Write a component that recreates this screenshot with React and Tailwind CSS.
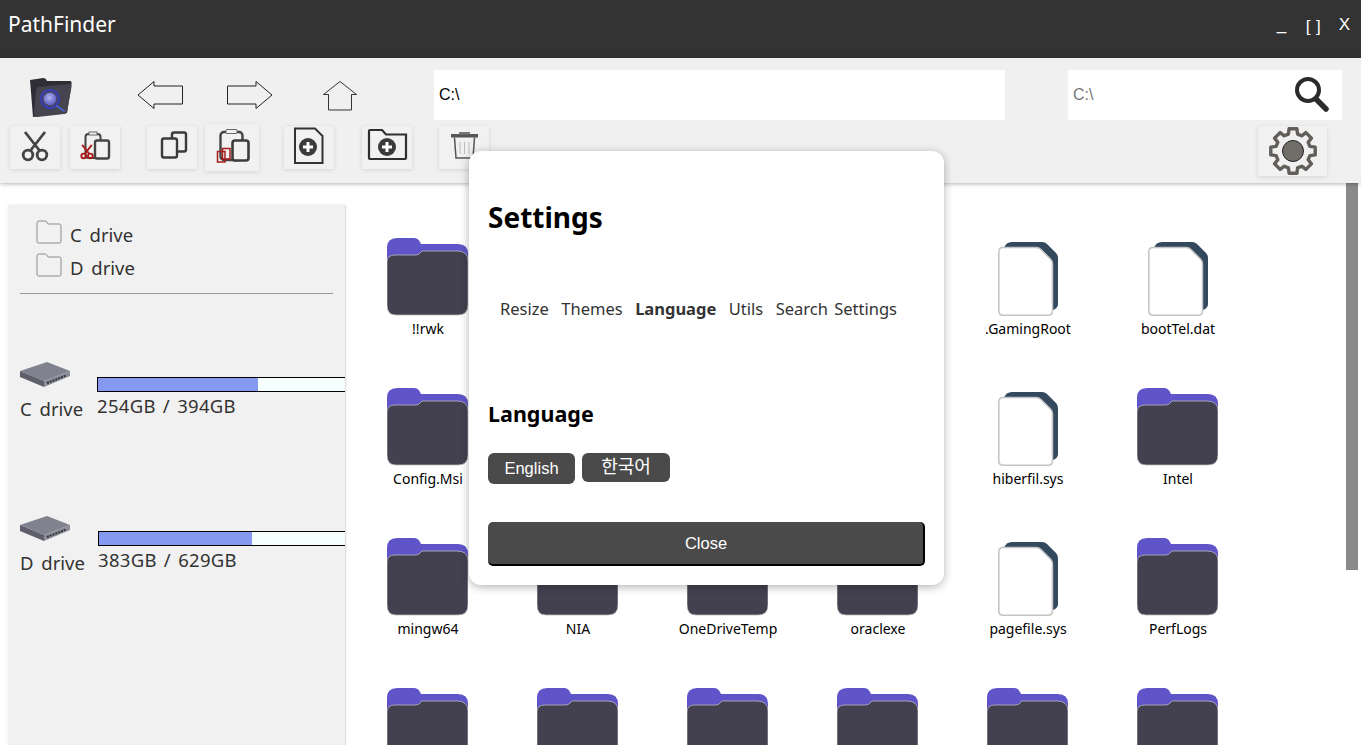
import React from 'react';

const uiFont = { fontFamily: '"Noto Sans", "Noto Sans CJK KR", sans-serif' };

const rows = [
    [['!!rwk', 'folder'], ['', 'folder'], ['', 'folder'], ['', 'folder'], ['.GamingRoot', 'file'], ['bootTel.dat', 'file']],
    [['Config.Msi', 'folder'], ['', 'folder'], ['', 'folder'], ['', 'folder'], ['hiberfil.sys', 'file'], ['Intel', 'folder']],
    [['mingw64', 'folder'], ['NIA', 'folder'], ['OneDriveTemp', 'folder'], ['oraclexe', 'folder'], ['pagefile.sys', 'file'], ['PerfLogs', 'folder']],
    [['', 'folder'], ['', 'folder'], ['', 'folder'], ['', 'folder'], ['', 'folder'], ['', 'folder']],
];

const gearPoints = (() => {
    const pts = [];
    const teeth = 8;
    for (let i = 0; i < teeth; i++) {
        const a = (i / teeth) * Math.PI * 2 - Math.PI / 2;
        const step = (Math.PI * 2) / teeth;
        [[-0.34, 17.5], [-0.22, 22.5], [0.22, 22.5], [0.34, 17.5]].forEach(([o, r]) => {
            const t = a + o * step;
            pts.push(`${(25 + r * Math.cos(t)).toFixed(1)},${(25 + r * Math.sin(t)).toFixed(1)}`);
        });
    }
    return pts.join(' ');
})();

const FolderIcon = () => (
    <svg width="81" height="78" viewBox="0 0 81 78" className="mr-px">
        <path d="M0 10 Q0 0 10 0 H27 Q31 0 33 4 L34 6 H71 Q81 6 81 16 V40 H0 Z" fill="#5f55c8" />
        <path d="M0 24 Q0 17 8 17 H29 Q32 17 34 14 L35 13 H70 Q81 13 81 23 V67 Q81 77 71 77 H9 Q0 77 0 67 Z" fill="#43414f" stroke="#b9b9bd" strokeWidth="0.8" />
    </svg>
);

const FileIcon = () => (
    <svg width="60" height="74" viewBox="0 0 60 74">
        <path d="M6 6 Q8 0 14 0 H44 Q47 0 49 2 L58 11 Q60 13 60 16 V62 Q60 66 55 68 H6 Z" fill="#34495e" />
        <path d="M5 5.5 H38 Q41 5.5 43 7.5 L52.5 17 Q54.5 19 54.5 22 V68.5 Q54.5 73.3 50 73.3 H5 Q0.8 73.3 0.8 68.5 V10 Q0.8 5.5 5 5.5 Z" fill="#fff" stroke="#c4c4c4" strokeWidth="1.5" />
    </svg>
);

const TreeFolder = () => (
    <svg width="26" height="24" viewBox="0 0 26 24" className="shrink-0">
        <path d="M1 3 Q1 1 3 1 H9 Q10.5 1 11.5 3 L12 4 H23.5 Q25 4 25 6 V21 Q25 23 23.5 23 H2.5 Q1 23 1 21 Z" fill="none" stroke="#8c8c8c" strokeWidth="1" />
    </svg>
);

const DriveIcon = () => (
    <svg width="50" height="26" viewBox="0 0 50 26" className="block">
        <polygon points="0,9 27,0 50,9 24,19" fill="#80828f" />
        <polygon points="0,9 24,19 24,25 0,15" fill="#5e5f6b" />
        <polygon points="24,19 50,9 50,14 24,25" fill="#8a8c97" />
        <path d="M27 21 L46 13.5" stroke="#34353c" strokeWidth="2" strokeDasharray="2 1" />
    </svg>
);

const AppLogo = () => (
    <svg width="43" height="40" viewBox="0 0 43 40">
        <defs>
            <radialGradient id="lens" cx="0.45" cy="0.4" r="0.6">
                <stop offset="0" stopColor="#b0b2f2" />
                <stop offset="1" stopColor="#5a5cc0" />
            </radialGradient>
        </defs>
        <path d="M1 2 L14 0 Q17 0 18 3 L41 3 Q43 3 42.5 6 L38 35 L4 39 Z" fill="#2f2e36" />
        <path d="M7 12 Q7 9 10 9 L40 6 Q43 6 42.5 9 L38 34 Q37.5 36 35 36 L8 39 Q5 39 5 36 Z" fill="#45444f" />
        <circle cx="21" cy="21" r="9" fill="none" stroke="#3a3fb0" strokeWidth="2.5" />
        <circle cx="21" cy="21" r="6.5" fill="url(#lens)" />
        <path d="M28 28 L35 33" stroke="#4a62c8" strokeWidth="2" strokeLinecap="round" />
    </svg>
);

const ToolButton = ({ className, children }) => (
    <button className={`shrink-0 bg-[#f1f1f1] shadow-[0_1px_4px_rgba(0,0,0,0.12)] ${className}`}>
        {children}
    </button>
);

const Scissors = ({ stroke = '#444', w = 2.8 }) => (
    <g fill="none" stroke={stroke} strokeWidth={w}>
        <circle cx="18" cy="29" r="4.8" />
        <circle cx="32" cy="29" r="4.8" />
        <path d="M20.5 24.5 L35 6 M29.5 24.5 L15 6" />
    </g>
);

const Toolbar = () => (
    <div className="h-[125px] bg-[#f0f0f0] shadow-[0_1px_4px_rgba(0,0,0,0.3)] relative z-10 shrink-0">
        <div className="flex items-start pt-[12px] h-[62px]">
            <div className="ml-[29px] mt-[8px]"><AppLogo /></div>
            <svg width="46" height="28" viewBox="0 0 46 28" className="ml-[65px] mt-[11px]">
                <polygon points="1,14 17,0.5 17,5 45.5,5 45.5,23 17,23 17,27.5" fill="none" stroke="#222" strokeWidth="1" />
            </svg>
            <svg width="46" height="28" viewBox="0 0 46 28" className="ml-[44px] mt-[11px]">
                <polygon points="45,14 29,0.5 29,5 0.5,5 0.5,23 29,23 29,27.5" fill="none" stroke="#222" strokeWidth="1" />
            </svg>
            <svg width="34" height="30" viewBox="0 0 34 30" className="ml-[50px] mt-[11px]">
                <polygon points="17,0.5 33.5,13.5 28.5,13.5 28.5,29 5.5,29 5.5,13.5 0.5,13.5" fill="none" stroke="#333" strokeWidth="1" />
            </svg>
            <input readOnly defaultValue="C:\" className="ml-[77px] w-[571px] h-[50px] bg-white pl-[5px] text-[16px] text-black outline-none font-['Liberation_Sans',sans-serif]" />
            <div className="ml-[63px] w-[274px] h-[50px] bg-white flex items-center">
                <input readOnly placeholder="C:\" className="w-[220px] pl-[5px] text-[16px] outline-none placeholder:text-[#777] font-['Liberation_Sans',sans-serif]" />
                <svg width="36" height="38" viewBox="0 0 36 38" className="ml-[5px]">
                    <circle cx="15" cy="14" r="11" fill="none" stroke="#2b2b2b" strokeWidth="4" />
                    <path d="M23 23 L33 33" stroke="#2b2b2b" strokeWidth="5.5" strokeLinecap="round" />
                </svg>
            </div>
        </div>
        <div className="flex items-start">
            <ToolButton className="ml-[10px] mt-[6px] w-[50px] h-[43px]">
                <svg width="50" height="43" viewBox="0 0 50 43"><Scissors /></svg>
            </ToolButton>
            <ToolButton className="ml-[10px] mt-[6px] w-[50px] h-[43px]">
                <svg width="50" height="43" viewBox="0 0 50 43">
                    <rect x="15.5" y="8" width="15" height="24" rx="3" fill="none" stroke="#444" strokeWidth="2" />
                    <rect x="19" y="6" width="8" height="3" fill="#f1f1f1" stroke="#666" strokeWidth="1" />
                    <rect x="25" y="14.5" width="14" height="18" rx="2" fill="#f1f1f1" stroke="#444" strokeWidth="2.4" />
                    <g transform="translate(5 16) scale(0.48)"><Scissors stroke="#a81c1c" w="4" /></g>
                </svg>
            </ToolButton>
            <ToolButton className="ml-[27px] mt-[6px] w-[50px] h-[43px]">
                <svg width="50" height="43" viewBox="0 0 50 43">
                    <rect x="25" y="6.5" width="14" height="19" rx="2" fill="none" stroke="#3b3b3b" strokeWidth="2.4" />
                    <rect x="15" y="12.5" width="15" height="19" rx="2" fill="#f1f1f1" stroke="#3b3b3b" strokeWidth="2.4" />
                </svg>
            </ToolButton>
            <ToolButton className="ml-[8px] mt-[4px] w-[54px] h-[47px]">
                <svg width="54" height="47" viewBox="0 0 54 47">
                    <rect x="15.5" y="8" width="22" height="28" rx="3.5" fill="none" stroke="#444" strokeWidth="2.4" />
                    <rect x="21" y="5.5" width="11" height="4" rx="1" fill="#f1f1f1" stroke="#666" strokeWidth="1" />
                    <rect x="27.5" y="16.5" width="16" height="20" rx="2.5" fill="#f1f1f1" stroke="#3b3b3b" strokeWidth="2.6" />
                    <rect x="12.5" y="27.5" width="7.5" height="10.5" fill="none" stroke="#a81c1c" strokeWidth="1.5" />
                    <rect x="17.5" y="24.5" width="7.5" height="10.5" fill="none" stroke="#a81c1c" strokeWidth="1.5" />
                </svg>
            </ToolButton>
            <ToolButton className="ml-[25px] mt-[6px] w-[50px] h-[43px]">
                <svg width="50" height="43" viewBox="0 0 50 43">
                    <path d="M11 2.5 H31 L38.5 10 V37 H11 Z" fill="none" stroke="#333" strokeWidth="2" />
                    <circle cx="24" cy="21" r="9" fill="#3b3b3b" />
                    <path d="M24 16 V26 M19 21 H29" stroke="#fff" strokeWidth="3" />
                </svg>
            </ToolButton>
            <ToolButton className="ml-[28px] mt-[6px] w-[50px] h-[43px]">
                <svg width="50" height="43" viewBox="0 0 50 43">
                    <path d="M7 5 Q7 4 8 4 H20 L24 8.5 H44 V32 Q44 33 43 33 H8 Q7 33 7 32 Z" fill="none" stroke="#2f2f2f" strokeWidth="2.2" />
                    <circle cx="25" cy="21" r="9" fill="#3b3b3b" />
                    <path d="M25 16 V26 M20 21 H30" stroke="#fff" strokeWidth="3" />
                </svg>
            </ToolButton>
            <ToolButton className="ml-[27px] mt-[6px] w-[50px] h-[43px]">
                <svg width="50" height="43" viewBox="0 0 50 43">
                    <rect x="12" y="8" width="27" height="3.5" fill="#555" />
                    <rect x="20" y="6" width="11" height="2.5" fill="#777" />
                    <path d="M15.5 11.5 L17 32 H34 L35.5 11.5" fill="none" stroke="#555" strokeWidth="1.5" />
                    <path d="M21 16 V28 M25.5 16 V28 M30 16 V28" stroke="#bbb" strokeWidth="1" />
                </svg>
            </ToolButton>
            <ToolButton className="ml-[769px] mt-[6px] w-[69px] h-[50px] flex items-center justify-center">
                <svg width="50" height="50" viewBox="0 0 50 50">
                    <polygon points={gearPoints} fill="#f0f0f0" stroke="#625f5b" strokeWidth="3.4" strokeLinejoin="round" />
                    <circle cx="25" cy="25" r="10.5" fill="#716d69" stroke="#222" strokeWidth="1" />
                </svg>
            </ToolButton>
        </div>
    </div>
);

const DriveRow = ({ name, used, total, percent, className, barOffset }) => (
    <div className={`flex ${className}`}>
        <div className="w-[77px] shrink-0">
            <DriveIcon />
            <div className="mt-[7px] text-[18.5px] leading-[27px] text-[#333] [word-spacing:3px] whitespace-nowrap">{name}</div>
        </div>
        <div className={`mt-[15px] w-[260px] shrink-0 ${barOffset}`}>
            <div className="h-[15px] border border-black bg-[#f5fffe]">
                <div className="h-full bg-[#8699f0]" style={{ width: `${percent}%` }} />
            </div>
            <div className="text-[18.5px] leading-[27px] text-[#333] tracking-[0.3px] [word-spacing:2px] whitespace-nowrap">{used} / {total}</div>
        </div>
    </div>
);

const Sidebar = () => (
    <aside className="w-[338px] shrink-0 h-[540px] bg-[#f1f1f1] border-r border-[#dddddd] overflow-hidden shadow-[0_0_3px_rgba(0,0,0,0.08)] pl-[12px] pt-[15px]">
        <div className="pl-[16px] space-y-[9px]">
            <div className="flex items-start gap-[8px] h-[24px]"><TreeFolder /><span className="text-[18.5px] leading-[30px] text-[#333] [word-spacing:3px]">C drive</span></div>
            <div className="flex items-start gap-[8px] h-[24px]"><TreeFolder /><span className="text-[18.5px] leading-[30px] text-[#333] [word-spacing:3px]">D drive</span></div>
        </div>
        <div className="h-px bg-[#999] w-[313px] mt-[16px]" />
        <DriveRow name="C drive" used="254GB" total="394GB" percent={62} className="mt-[68px]" barOffset="" />
        <DriveRow name="D drive" used="383GB" total="629GB" percent={59.3} className="mt-[94px]" barOffset="ml-px" />
    </aside>
);

const FileGrid = () => (
    <div className="w-[984px] shrink-0 pl-[7px] pt-[33px] overflow-hidden h-[540px]">
        <div className="grid grid-cols-[repeat(6,150px)] auto-rows-[150px]">
            {rows.flat().map(([name, kind], i) => (
                <div key={i} className="flex flex-col items-center">
                    <div className="h-[78px] flex items-end justify-center">
                        {kind === 'folder' ? <FolderIcon /> : <FileIcon />}
                    </div>
                    <div className="mt-[3px] h-[20px] text-[14px] leading-[20px] text-black whitespace-nowrap">{name}</div>
                </div>
            ))}
        </div>
    </div>
);

const SettingsModal = () => (
    <div className="absolute left-[469px] top-[151px] w-[475px] h-[434px] bg-white rounded-[12px] shadow-[0_2px_10px_rgba(0,0,0,0.3)] z-20 px-[19px]">
        <h1 className="mt-[44px] text-[28px] leading-[44px] font-bold text-black">Settings</h1>
        <div className="mt-[56px] pl-[12px] flex gap-[12.5px] text-[16.5px] leading-[28px] text-[#333] whitespace-nowrap">
            <span>Resize</span>
            <span>Themes</span>
            <span className="font-bold">Language</span>
            <span>Utils</span>
            <span className="[word-spacing:2px]">Search Settings</span>
        </div>
        <h2 className="mt-[75px] text-[21.5px] leading-[32px] font-bold text-black">Language</h2>
        <div className="mt-[23px] flex gap-[7px] items-start font-['Liberation_Sans','Noto_Sans_CJK_KR',sans-serif] text-[16.5px] text-white">
            <button className="w-[87px] h-[31px] bg-[#4a4a4a] rounded-[6px]">English</button>
            <button className="w-[88px] h-[29px] bg-[#4a4a4a] rounded-[6px] text-[18px]">한국어</button>
        </div>
        <button className="mt-[38px] w-[437px] h-[44px] pl-px pt-px bg-[#4a4a4a] rounded-[5px] border-r-2 border-b-2 border-black text-white text-[16.5px] font-['Liberation_Sans',sans-serif]">Close</button>
    </div>
);

const App = () => {
    return (
        <div className="relative w-[1361px] h-[745px] overflow-hidden bg-white flex flex-col" style={uiFont}>
            {/* Title bar */}
            <div className="h-[58px] bg-[#333333] shrink-0 flex items-start justify-between text-white">
                <div className="pl-[8px] pt-[8px] text-[21px] leading-[32px]">PathFinder</div>
                <div className="flex pt-[14px] pr-[11px] text-[17px] leading-[22px] font-['Liberation_Sans',sans-serif]">
                    <span className="w-[29px]">_</span>
                    <span className="w-[33px] pt-[2px] [word-spacing:1px]">[ ]</span>
                    <span>X</span>
                </div>
            </div>
            <Toolbar />
            <div className="flex flex-1 min-h-0">
                <div className="flex flex-1 pl-[8px] pt-[22px]">
                    <Sidebar />
                    <FileGrid />
                </div>
                <div className="w-[31px] shrink-0 pl-[16px]">
                    <div className="w-[12px] h-[387px] bg-[#8a8a8a]" />
                </div>
            </div>
            <SettingsModal />
        </div>
    );
};

export default App;
